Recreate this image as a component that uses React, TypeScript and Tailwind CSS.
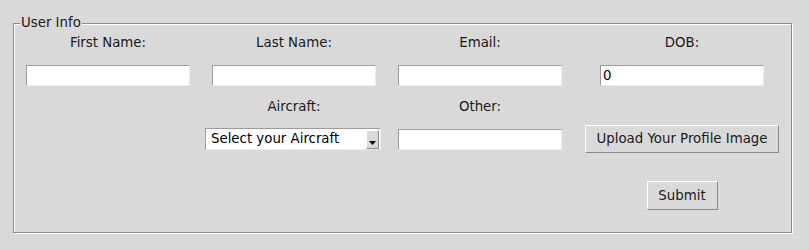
const entry =
  "h-[21px] w-[164px] bg-white border-t border-l border-t-[#9c9c9c] border-l-[#9c9c9c] border-b border-r border-b-[#ececec] border-r-[#ececec] px-[2px] text-[13.33px] leading-[19px] text-black outline-none";

const label = "text-[13.33px] leading-[16px] text-[#1a1a1a] text-center";

const raised =
  "bg-[#d9d9d9] border border-t-white border-l-white border-b-[#8a8a8a] border-r-[#8a8a8a] text-[13.33px] text-[#1a1a1a]";

export default function App() {
  return (
    <div className="w-[809px] h-[250px] bg-[#d9d9d9] pt-[23px] pl-[13px] font-['DejaVu_Sans',sans-serif]">
      <div className="relative w-[779px] h-[210px] border border-[#8a8a8a] shadow-[inset_1px_1px_0_#fff,1px_1px_0_#fff]">
        {/* frame caption sits over the groove */}
        <div className="absolute left-[6px] top-[-9px] bg-[#d9d9d9] px-[1px] text-[13.33px] leading-[16px] text-[#1a1a1a]">
          User Info
        </div>

        <div className="grid grid-cols-[186px_186px_186px_218px] grid-rows-[36px_29px_34px_30px_auto] ml-[1px] mt-[1px]">
          <div className={`${label} self-center`}>First Name:</div>
          <div className={`${label} self-center`}>Last Name:</div>
          <div className={`${label} self-center`}>Email:</div>
          <div className={`${label} self-center`}>DOB:</div>

          <div className="flex items-center justify-center">
            <input className={entry} />
          </div>
          <div className="flex items-center justify-center">
            <input className={entry} />
          </div>
          <div className="flex items-center justify-center">
            <input className={entry} />
          </div>
          <div className="flex items-center justify-center">
            <input className={entry} defaultValue="0" />
          </div>

          <div />
          <div className={`${label} self-center`}>Aircraft:</div>
          <div className={`${label} self-center`}>Other:</div>
          <div />

          <div />
          <div className="flex items-center justify-center pr-[2px]">
            <div className="flex h-[22px] w-[176px] items-center bg-white border-t border-l border-t-[#9c9c9c] border-l-[#9c9c9c] border-b border-r border-b-[#ececec] border-r-[#ececec]">
              <span className="flex-1 pl-[5px] text-[13.33px] leading-[20px] text-black">Select your Aircraft</span>
              <div className="mr-[1px] flex h-[19px] w-[13px] items-end justify-center bg-[#d9d9d9] border border-t-white border-l-white border-b-[#8a8a8a] border-r-[#8a8a8a] pb-[3px]">
                <svg width="7" height="4" viewBox="0 0 7 4">
                  <polygon points="0,0 7,0 3.5,4" fill="#000" />
                </svg>
              </div>
            </div>
          </div>
          <div className="flex items-center justify-center">
            <input className={entry} />
          </div>
          <div className="flex items-center justify-center">
            <button className={`${raised} h-[28px] w-[194px]`}>Upload Your Profile Image</button>
          </div>

          <div className="col-start-4 flex justify-center pt-[27px]">
            <button className={`${raised} h-[29px] w-[71px]`}>Submit</button>
          </div>
        </div>
      </div>
    </div>
  );
}
